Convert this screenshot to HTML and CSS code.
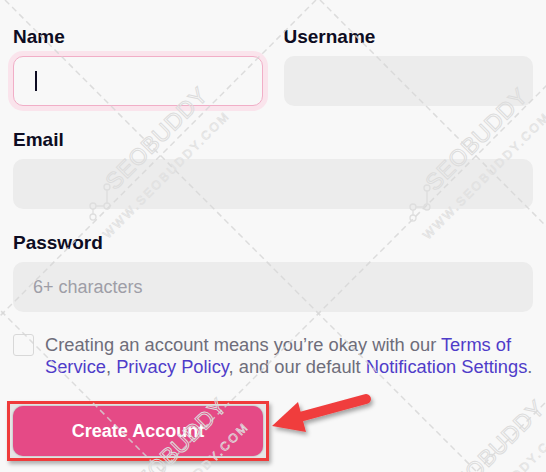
FILE: index.html
```html
<!DOCTYPE html>
<html lang="en">
<head>
<meta charset="utf-8">
<title>Sign up</title>
<link rel="stylesheet" href="styles.css">
</head>
<body>
<form class="signup">
  <div class="row">
    <div class="field">
      <label class="label">Name</label>
      <div class="input is-focused"><span class="caret"></span></div>
    </div>
    <div class="field">
      <label class="label">Username</label>
      <div class="input"></div>
    </div>
  </div>
  <div class="field">
    <label class="label">Email</label>
    <div class="input"></div>
  </div>
  <div class="field field-last">
    <label class="label">Password</label>
    <div class="input"><span class="placeholder">6+ characters</span></div>
  </div>
  <div class="terms">
    <span class="checkbox"></span>
    <p class="terms-text">Creating an account means you’re okay with our <a href="#">Terms of<br>Service</a>, <a href="#">Privacy Policy</a>, and our default <a href="#">Notification Settings</a>.</p>
  </div>
  <div class="highlight">
    <button type="button" class="btn-primary">Create Account</button>
  </div>
</form>

<svg class="overlay" width="546" height="472" viewBox="0 0 546 472" aria-hidden="true">
  <defs>
    <filter id="shadow" x="-20%" y="-40%" width="140%" height="180%">
      <feDropShadow dx="2" dy="3" stdDeviation="2" flood-color="#000" flood-opacity="0.35"/>
    </filter>
    <g id="wm">
      <circle cx="0" cy="0" r="3" class="wm-node"/>
      <circle cx="0" cy="-11" r="3" class="wm-node"/>
      <circle cx="14" cy="-11" r="3" class="wm-node"/>
      <circle cx="14" cy="-30" r="3" class="wm-node"/>
      <line x1="0" y1="-3" x2="0" y2="-8" class="wm-node"/>
      <line x1="3" y1="-11" x2="11" y2="-11" class="wm-node"/>
      <line x1="14" y1="-14" x2="14" y2="-27" class="wm-node"/>
      <text transform="translate(22 -26) rotate(-45)" class="wm-big">SEOBUDDY</text>
      <text transform="translate(15 22) rotate(-45)" class="wm-small">WWW.SEOBUDDY.COM</text>
    </g>
  </defs>
  <g class="wm-lines">
    <line x1="5" y1="0" x2="477" y2="472"/>
    <line x1="320" y1="0" x2="792" y2="472"/>
    <line x1="-310" y1="0" x2="162" y2="472"/>
    <line x1="316" y1="0" x2="-156" y2="472"/>
    <line x1="632" y1="0" x2="160" y2="472"/>
    <line x1="948" y1="0" x2="476" y2="472"/>
  </g>
  <use href="#wm" transform="translate(93 217)"/>
  <use href="#wm" transform="translate(413 218)"/>
  <use href="#wm" transform="translate(112 528)"/>
  <use href="#wm" transform="translate(430 530)"/>

  <g filter="url(#shadow)" class="arrow">
    <line x1="366" y1="399" x2="296" y2="418" class="arrow-shaft"/>
    <polygon points="272,426 298,402 306,432" class="arrow-head"/>
  </g>
</svg>
</body>
</html>
```

FILE: styles.css
```css
* {
  box-sizing: border-box;
}

html, body {
  margin: 0;
  padding: 0;
}

body {
  width: 546px;
  height: 472px;
  overflow: hidden;
  position: relative;
  background: #f8f8f8;
  font-family: "Liberation Sans", Arial, sans-serif;
  color: #0d0c22;
}

.signup {
  width: 520px;
  margin: 0 0 0 13px;
  padding-top: 26px;
}

.row {
  display: grid;
  grid-template-columns: 1fr 1fr;
  column-gap: 21px;
}

.field {
  display: flex;
  flex-direction: column;
  margin-bottom: 23px;
}

.field-last {
  margin-bottom: 22px;
}

.label {
  font-size: 19px;
  line-height: 22px;
  font-weight: 700;
  color: #0d0c22;
  margin-bottom: 8px;
}

.input {
  height: 50px;
  border-radius: 10px;
  background: #ececec;
  display: flex;
  align-items: center;
  padding: 0 20px;
}

.input.is-focused {
  background: #f8f8f8;
  border: 1px solid #f1aec7;
  box-shadow: 0 0 0 5px #fae4ec;
}

.caret {
  display: block;
  width: 1.5px;
  height: 20px;
  background: #0d0c22;
  margin-left: 1px;
}

.placeholder {
  font-size: 18px;
  color: #9e9ea7;
}

.terms {
  display: flex;
  align-items: flex-start;
}

.checkbox {
  flex: 0 0 auto;
  width: 21px;
  height: 22px;
  border: 1px solid #d8d8d8;
  border-radius: 3px;
  background: #f8f8f8;
}

.terms-text {
  margin: 0 0 0 11px;
  font-size: 18.3px;
  line-height: 22px;
  color: #6e6d7a;
  white-space: nowrap;
}

.terms-text a {
  color: #4f3cc9;
  text-decoration: none;
}

.highlight {
  display: inline-block;
  margin: 23px 0 0 -6px;
  border: 3px solid #ef3b3b;
  padding: 2px 3px;
  background: #e6e6e6;
  box-shadow: 2px 3px 4px rgba(0, 0, 0, 0.3);
}

.btn-primary {
  display: block;
  width: 250px;
  height: 50px;
  border: 0;
  border-radius: 10px;
  background: #e54a86;
  color: #fff;
  font-family: "Liberation Sans", Arial, sans-serif;
  font-size: 18px;
  font-weight: 700;
  box-shadow: 0 0 2px rgba(0, 0, 0, 0.35);
}

.overlay {
  position: absolute;
  left: 0;
  top: 0;
  pointer-events: none;
}

.wm-lines line {
  stroke: #d6d6d6;
  stroke-width: 1.5;
  stroke-dasharray: 6 4;
  opacity: 0.8;
}

.wm-node {
  fill: none;
  stroke: #dedede;
  stroke-width: 1.3;
}

.wm-big {
  font-family: "Liberation Sans", Arial, sans-serif;
  font-size: 23px;
  letter-spacing: 0.5px;
  fill: none;
  stroke: #dcdcdc;
  stroke-width: 1;
}

.wm-small {
  font-family: "Liberation Sans", Arial, sans-serif;
  font-size: 12px;
  letter-spacing: 2.5px;
  fill: none;
  stroke: #e0e0e0;
  stroke-width: 0.7;
}

.arrow-shaft {
  stroke: #f03e3e;
  stroke-width: 10;
  stroke-linecap: round;
}

.arrow-head {
  fill: #f03e3e;
}
```
